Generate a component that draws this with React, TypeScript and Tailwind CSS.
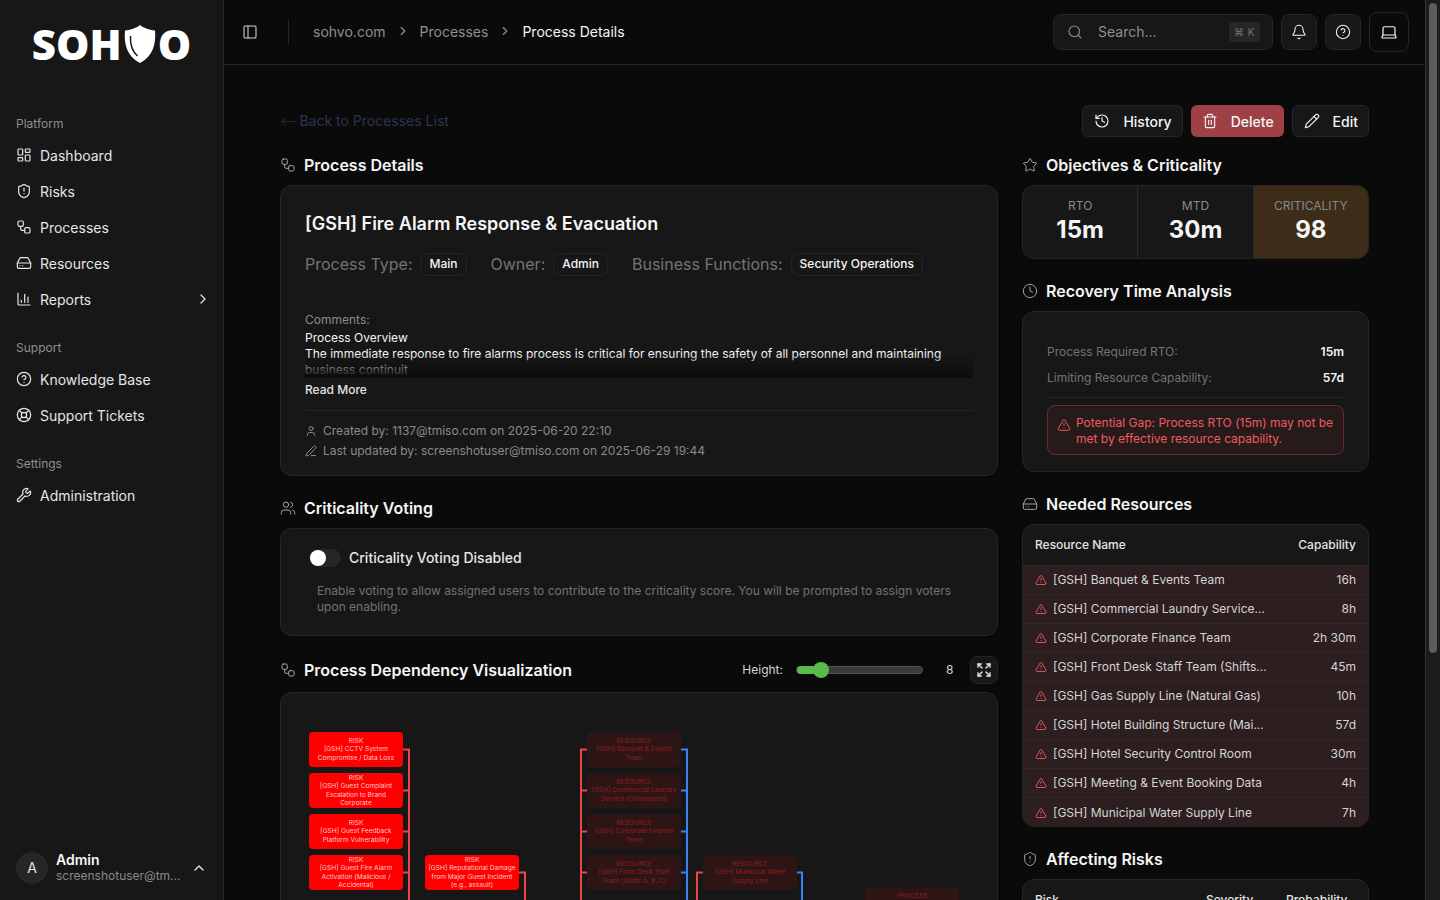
import React from 'react';
import {
  Bell,
  ChartColumn,
  ChevronRight,
  ChevronUp,
  CircleHelp,
  Clock,
  Expand,
  HardDrive,
  History,
  Laptop,
  LayoutDashboard,
  LifeBuoy,
  PanelLeft,
  PenLine,
  Pencil,
  Search,
  ShieldAlert,
  Star,
  Trash2,
  TriangleAlert,
  User,
  Users,
  Workflow,
  Wrench,
} from 'lucide-react';

const font = { fontFamily: 'Inter, "Liberation Sans", sans-serif' };

const resources = [
  { name: '[GSH] Banquet & Events Team', cap: '16h' },
  { name: '[GSH] Commercial Laundry Service...', cap: '8h' },
  { name: '[GSH] Corporate Finance Team', cap: '2h 30m' },
  { name: '[GSH] Front Desk Staff Team (Shifts...', cap: '45m' },
  { name: '[GSH] Gas Supply Line (Natural Gas)', cap: '10h' },
  { name: '[GSH] Hotel Building Structure (Mai...', cap: '57d' },
  { name: '[GSH] Hotel Security Control Room', cap: '30m' },
  { name: '[GSH] Meeting & Event Booking Data', cap: '4h' },
  { name: '[GSH] Municipal Water Supply Line', cap: '7h' },
];

type DiagramNode = { kind: 'risk' | 'res'; title: string; lines: string[]; x: number; y: number };

// coordinates are relative to the diagram canvas
const nodes: DiagramNode[] = [
  { kind: 'risk', title: 'RISK', lines: ['[GSH] CCTV System', 'Compromise / Data Loss'], x: 28, y: 39 },
  { kind: 'risk', title: 'RISK', lines: ['[GSH] Guest Complaint', 'Escalation to Brand', 'Corporate'], x: 28, y: 80 },
  { kind: 'risk', title: 'RISK', lines: ['[GSH] Guest Feedback', 'Platform Vulnerability'], x: 28, y: 121 },
  { kind: 'risk', title: 'RISK', lines: ['[GSH] Guest Fire Alarm', 'Activation (Malicious /', 'Accidental)'], x: 28, y: 162 },
  { kind: 'risk', title: 'RISK', lines: ['[GSH] Reputational Damage', 'from Major Guest Incident', '(e.g., assault)'], x: 144, y: 162 },
  { kind: 'res', title: 'RESOURCE', lines: ['[GSH] Banquet & Events', 'Team'], x: 306, y: 39 },
  { kind: 'res', title: 'RESOURCE', lines: ['[GSH] Commercial Laundry', 'Service (Outsourced)'], x: 306, y: 80 },
  { kind: 'res', title: 'RESOURCE', lines: ['[GSH] Corporate Finance', 'Team'], x: 306, y: 121 },
  { kind: 'res', title: 'RESOURCE', lines: ['[GSH] Front Desk Staff', 'Team (Shifts A, B, C)'], x: 306, y: 162 },
  { kind: 'res', title: 'RESOURCE', lines: ['[GSH] Municipal Water', 'Supply Line'], x: 422, y: 162 },
  { kind: 'res', title: 'PROCESS', lines: ['[GSH] Fire Alarm Response', '& Evacuation'], x: 584, y: 194 },
];

const NODE_W = 94;
const NODE_H = 35;

const NavItem = ({ icon: Icon, label, chevron }: { icon: React.ElementType; label: string; chevron?: boolean }) => (
  <div className="flex h-9 items-center gap-2 pl-4 pr-3 text-[14px] text-[#e5e5e5]">
    <Icon size={16} strokeWidth={1.8} className="shrink-0" />
    <span className="flex-1">{label}</span>
    {chevron && <ChevronRight size={16} strokeWidth={1.8} />}
  </div>
);

const NavLabel = ({ children }: { children: React.ReactNode }) => (
  <div className="flex h-[27px] items-center pl-4 text-[12px] text-[#8f8f8f]">{children}</div>
);

const Heading = ({ icon: Icon, children }: { icon: React.ElementType; children: React.ReactNode }) => (
  <div className="mb-2 flex h-6 items-center gap-2 text-[16px] font-semibold text-[#f5f5f5]">
    <Icon size={16} strokeWidth={1.5} className="text-[#a3a3a3]" />
    <span>{children}</span>
  </div>
);

const Badge = ({ children }: { children: React.ReactNode }) => (
  <span className="flex h-[23px] items-center rounded-[8px] border border-[#262626] px-[8px] text-[12px] font-medium text-[#f5f5f5]">
    {children}
  </span>
);

const Stat = ({ label, value, highlight }: { label: string; value: string; highlight?: boolean }) => (
  <div className={`flex flex-1 flex-col items-center pt-3 ${highlight ? 'bg-[#3d2c17]' : 'border-r border-[#2a2a2a]'}`}>
    <div className="text-[12px] leading-[16px] text-[#8a8a8a]">{label}</div>
    <div className="mt-[1px] text-[24px] font-bold leading-[30px] text-[#f5f5f5]">{value}</div>
  </div>
);

const Diagram = () => (
  <div className="relative h-[436px]">
    <svg className="absolute left-0 top-0 h-full w-full" fill="none" strokeWidth="2">
      <path stroke="#ef4444" d="M122 56.5H128V400M122 97.5H128M122 138.5H128M122 179.5H128" />
      <path stroke="#ef4444" d="M238 179.5H244V400" />
      <path stroke="#ef4444" d="M306 56.5H300V400M306 97.5H300M306 138.5H300M306 179.5H300" />
      <path stroke="#3b82f6" d="M400 56.5H406V400M400 97.5H406M400 138.5H406M400 179.5H406" />
      <path stroke="#ef4444" d="M422 179.5H416V400" />
      <path stroke="#3b82f6" d="M516 179.5H521V400" />
    </svg>
    {nodes.map((n) => (
      <div
        key={n.title + n.lines[0]}
        style={{ left: n.x, top: n.y, width: NODE_W, height: NODE_H }}
        className={`absolute flex flex-col items-center justify-center rounded-[4px] text-center text-[6.6px] leading-[8.4px] ${
          n.kind === 'risk' ? 'bg-[#ff0000] text-[#ffc9c9]' : 'bg-[#2d1515] text-[#8f1d1d]'
        }`}
      >
        <div>{n.title}</div>
        {n.lines.map((l) => (
          <div key={l}>{l}</div>
        ))}
      </div>
    ))}
  </div>
);

const Sidebar = () => (
  <aside className="flex h-screen w-[224px] shrink-0 flex-col border-r border-[#262626] bg-[#171717]">
    <div className="flex h-[88px] items-center justify-center">
      <span className="flex items-center text-[42px] font-extrabold leading-none text-white" style={{ fontFamily: '"Open Sans", sans-serif' }}>
        SOH
        <svg viewBox="0 0 32 38" className="mx-[2px] -mt-[1px] h-[38px] w-[32px]">
          <path fill="#fff" d="M16 0c3 2.600 9 5 15 5.600 1 12-1 25-15 32.400C2 30.600 0 17.600 1 5.600 7 5 13 2.600 16 0z" />
          <path fill="none" stroke="#171717" strokeWidth="1.500" d="M6.500 11c-.5 8 1.500 15 7 20" />
        </svg>
        O
      </span>
    </div>
    <div className="mt-[22px]">
      <NavLabel>Platform</NavLabel>
      <NavItem icon={LayoutDashboard} label="Dashboard" />
      <NavItem icon={ShieldAlert} label="Risks" />
      <NavItem icon={Workflow} label="Processes" />
      <NavItem icon={HardDrive} label="Resources" />
      <NavItem icon={ChartColumn} label="Reports" chevron />
    </div>
    <div className="mt-[17px]">
      <NavLabel>Support</NavLabel>
      <NavItem icon={CircleHelp} label="Knowledge Base" />
      <NavItem icon={LifeBuoy} label="Support Tickets" />
    </div>
    <div className="mt-[17px]">
      <NavLabel>Settings</NavLabel>
      <NavItem icon={Wrench} label="Administration" />
    </div>
    <div className="mt-auto flex h-[64px] items-center gap-2 pb-[1px] pl-4 pr-4">
      <div className="flex h-8 w-8 items-center justify-center rounded-full bg-[#262626] text-[14px] text-[#e5e5e5]">A</div>
      <div className="min-w-0 flex-1">
        <div className="text-[14px] font-semibold leading-[17px] text-[#f5f5f5]">Admin</div>
        <div className="truncate text-[12px] leading-[16px] text-[#8a8a8a]">screenshotuser@tm...</div>
      </div>
      <ChevronUp size={16} strokeWidth={2} className="text-[#e5e5e5]" />
    </div>
  </aside>
);

const Topbar = () => (
  <header className="sticky top-0 z-10 flex h-[65px] items-center border-b border-[#262626] bg-[#0a0a0a] pl-[18px] pr-4">
    <PanelLeft size={16} strokeWidth={1.6} className="text-[#d4d4d4]" />
    <div className="ml-[30px] h-6 w-px bg-[#262626]" />
    <nav className="ml-6 flex items-center pb-[2px] text-[14px] text-[#8f8f8f]">
      <span>sohvo.com</span>
      <ChevronRight size={14} className="mx-[10px]" />
      <span>Processes</span>
      <ChevronRight size={14} className="mx-[10px]" />
      <span className="text-[#f5f5f5]">Process Details</span>
    </nav>
    <div className="ml-auto flex items-center gap-2">
      <div className="flex h-9 w-[220px] items-center rounded-[8px] border border-[#262626] bg-[#171717] pl-[13px] pr-3">
        <Search size={16} strokeWidth={1.6} className="text-[#8f8f8f]" />
        <span className="ml-[15px] flex-1 pb-[2px] text-[14px] text-[#8f8f8f]">Search...</span>
        <span className="rounded-[4px] bg-[#262626] px-[5px] py-[2px] text-[10px] leading-[16px] tracking-[0.05em] text-[#737373]">⌘ K</span>
      </div>
      <div className="flex h-9 w-9 items-center justify-center rounded-[8px] border border-[#262626] bg-[#171717] text-[#f5f5f5]">
        <Bell size={16} strokeWidth={1.6} />
      </div>
      <div className="flex h-9 w-9 items-center justify-center rounded-[8px] border border-[#262626] bg-[#171717] text-[#f5f5f5]">
        <CircleHelp size={16} strokeWidth={1.6} />
      </div>
      <div className="flex h-10 w-10 items-center justify-center rounded-[8px] border border-[#262626] text-[#f5f5f5]">
        <Laptop size={18} strokeWidth={1.6} />
      </div>
    </div>
  </header>
);

// the window's scrollbar as it appears in the picture
const ScrollTrack = () => (
  <div className="h-screen w-[15px] shrink-0 border-l border-[#333333] bg-[#1c1c1c] pl-[3px] pr-[3px] pt-[3px]">
    <div className="h-[650px] rounded-full bg-[#5c5c5c]" />
  </div>
);

const App: React.FC = () => {
  return (
    <div className="flex h-screen overflow-hidden bg-[#0a0a0a]" style={font}>
      <Sidebar />
      <main className="h-screen min-w-0 flex-1 overflow-y-auto">
        <Topbar />
        <div className="px-14 pb-[110px] pt-10">
          <div className="flex h-8 items-center justify-between">
            <span className="-mt-[1px] text-[14px] text-[#2a3550]">
              <span className="-mr-[2px] inline-block text-[13px] text-[#1f2937]">⟵</span> Back to Processes List
            </span>
            <div className="flex items-center gap-2 text-[14px] font-medium text-[#f5f5f5]">
              <button className="flex h-8 items-center gap-[13px] rounded-[6px] border border-[#262626] bg-[#171717] pl-[11px] pr-[10px]">
                <History size={16} strokeWidth={1.7} /> History
              </button>
              <button className="flex h-8 items-center gap-[13px] rounded-[6px] bg-[#9f4044] pl-[11px] pr-[10px]">
                <Trash2 size={16} strokeWidth={1.7} /> Delete
              </button>
              <button className="flex h-8 items-center gap-[13px] rounded-[6px] border border-[#262626] bg-[#171717] pl-[11px] pr-[10px]">
                <Pencil size={16} strokeWidth={1.7} /> Edit
              </button>
            </div>
          </div>

          <div className="mt-4 grid grid-cols-[718px_347px] gap-6">
            <div>
              <Heading icon={Workflow}>Process Details</Heading>
              <section className="h-[291px] rounded-[12px] border border-[#262626] bg-[#171717] px-6 pt-6">
                <h1 className="text-[18px] font-semibold leading-[28px] text-[#f5f5f5]">[GSH] Fire Alarm Response &amp; Evacuation</h1>
                <div className="mt-[14px] flex items-center text-[16px] leading-[24px] text-[#737373]">
                  <span>Process Type:</span>
                  <span className="ml-2"><Badge>Main</Badge></span>
                  <span className="ml-6">Owner:</span>
                  <span className="ml-2"><Badge>Admin</Badge></span>
                  <span className="ml-6">Business Functions:</span>
                  <span className="ml-2"><Badge>Security Operations</Badge></span>
                </div>
                <div className="mt-[36px] text-[12px] leading-[16px] text-[#8a8a8a]">Comments:</div>
                <div className="relative mt-[2px] h-[48px] overflow-hidden text-[12px] leading-[16px] text-[#f5f5f5]">
                  <div>Process Overview</div>
                  <div>The immediate response to fire alarms process is critical for ensuring the safety of all personnel and maintaining</div>
                  <div>business continuit</div>
                  <div className="absolute bottom-0 left-0 h-6 w-full bg-gradient-to-b from-transparent to-[#0c0c0c]" />
                </div>
                <div className="mt-[4px] text-[12px] font-medium leading-[16px] text-[#e5e5e5]">Read More</div>
                <div className="mt-3 border-t border-[#262626] pt-[10px] text-[12px] leading-[20px] text-[#8a8a8a]">
                  <div className="flex items-center gap-[6px]">
                    <User size={12} /> Created by: 1137@tmiso.com on 2025-06-20 22:10
                  </div>
                  <div className="flex items-center gap-[6px]">
                    <PenLine size={12} /> Last updated by: screenshotuser@tmiso.com on 2025-06-29 19:44
                  </div>
                </div>
              </section>

              <div className="mt-5">
                <Heading icon={Users}>Criticality Voting</Heading>
                <section className="h-[108px] rounded-[12px] border border-[#262626] bg-[#171717] pl-7 pr-6 pt-[18px]">
                  <div className="flex items-center gap-2">
                    <div className="flex h-[18px] w-8 items-center rounded-full bg-[#262626] px-[1px]">
                      <div className="h-4 w-4 rounded-full bg-white" />
                    </div>
                    <span className="text-[14px] font-medium text-[#e5e5e5]">Criticality Voting Disabled</span>
                  </div>
                  <p className="ml-2 mt-[15px] text-[12px] leading-[16px] text-[#737373]">
                    Enable voting to allow assigned users to contribute to the criticality score. You will be prompted to assign voters upon enabling.
                  </p>
                </section>
              </div>

              <div className="mt-5">
                <div className="mb-2 flex h-7 items-center">
                  <Workflow size={16} strokeWidth={1.5} className="text-[#a3a3a3]" />
                  <span className="ml-2 text-[16px] font-semibold text-[#f5f5f5]">Process Dependency Visualization</span>
                  <span className="ml-auto text-[12px] text-[#d4d4d4]">Height:</span>
                  <div className="relative ml-[13px] flex h-2 w-[127px] items-center rounded-full border border-[#525252] bg-[#3a3a3a]">
                    <div className="h-2 w-[25px] rounded-l-full bg-[#5cb84a]" />
                    <div className="absolute left-[16px] h-4 w-4 rounded-full bg-[#5cb84a]" />
                  </div>
                  <span className="ml-[23px] w-[8px] text-[12px] text-[#d4d4d4]">8</span>
                  <div className="ml-[16px] flex h-7 w-7 items-center justify-center rounded-[8px] border border-[#262626] bg-[#171717] text-[#e5e5e5]">
                    <Expand size={16} strokeWidth={2} />
                  </div>
                </div>
                <section className="overflow-hidden rounded-[12px] border border-[#262626] bg-[#171717]">
                  <Diagram />
                </section>
              </div>
            </div>

            <div>
              <Heading icon={Star}>Objectives &amp; Criticality</Heading>
              <section className="flex h-[74px] overflow-hidden rounded-[12px] border border-[#262626] bg-[#171717]">
                <Stat label="RTO" value="15m" />
                <Stat label="MTD" value="30m" />
                <Stat label="CRITICALITY" value="98" highlight />
              </section>

              <div className="mt-5">
                <Heading icon={Clock}>Recovery Time Analysis</Heading>
                <section className="h-[161px] rounded-[12px] border border-[#262626] bg-[#171717] px-6 pt-[27px] text-[12px] leading-[26px]">
                  <div className="flex justify-between">
                    <span className="text-[#737373]">Process Required RTO:</span>
                    <span className="font-semibold text-[#f5f5f5]">15m</span>
                  </div>
                  <div className="flex justify-between">
                    <span className="text-[#737373]">Limiting Resource Capability:</span>
                    <span className="font-semibold text-[#f5f5f5]">57d</span>
                  </div>
                  <div className="mt-[6px] border-t border-[#262626] pt-[7px]">
                    <div className="flex h-[50px] items-start gap-[5px] rounded-[8px] border border-[#6b2a2e] bg-[#261a1b] pl-[9px] pr-2 pt-[9px] text-[12px] leading-[16px] text-[#ef5a5f]">
                      <TriangleAlert size={14} strokeWidth={1.7} className="mt-[3px] shrink-0" />
                      <span>Potential Gap: Process RTO (15m) may not be met by effective resource capability.</span>
                    </div>
                  </div>
                </section>
              </div>

              <div className="mt-5">
                <Heading icon={HardDrive}>Needed Resources</Heading>
                <section className="h-[303px] overflow-hidden rounded-[12px] border border-[#262626] bg-[#171717] text-[12px]">
                  <div className="flex h-[41px] items-center justify-between border-b border-[#262626] px-3 font-medium text-[#e5e5e5]">
                    <span>Resource Name</span>
                    <span>Capability</span>
                  </div>
                  {resources.map((r) => (
                    <div key={r.name} className="flex h-[29px] items-center border-b border-[#352525] bg-[#2d1f1f] px-3 text-[#d4d4d4] last:border-b-0">
                      <TriangleAlert size={12} strokeWidth={1.8} className="shrink-0 text-[#ef5a5f]" />
                      <span className="ml-[6px] flex-1 truncate">{r.name}</span>
                      <span>{r.cap}</span>
                    </div>
                  ))}
                </section>
              </div>

              <div className="mt-5">
                <Heading icon={ShieldAlert}>Affecting Risks</Heading>
                <section className="overflow-hidden rounded-[12px] border border-[#262626] bg-[#171717] text-[12px]">
                  <div className="flex h-[41px] items-center border-b border-[#262626] px-3 font-medium text-[#e5e5e5]">
                    <span className="w-[171px]">Risk</span>
                    <span className="w-[80px]">Severity</span>
                    <span>Probability</span>
                  </div>
                </section>
              </div>
            </div>
          </div>
        </div>
      </main>
      <ScrollTrack />
    </div>
  );
};

export default App;
